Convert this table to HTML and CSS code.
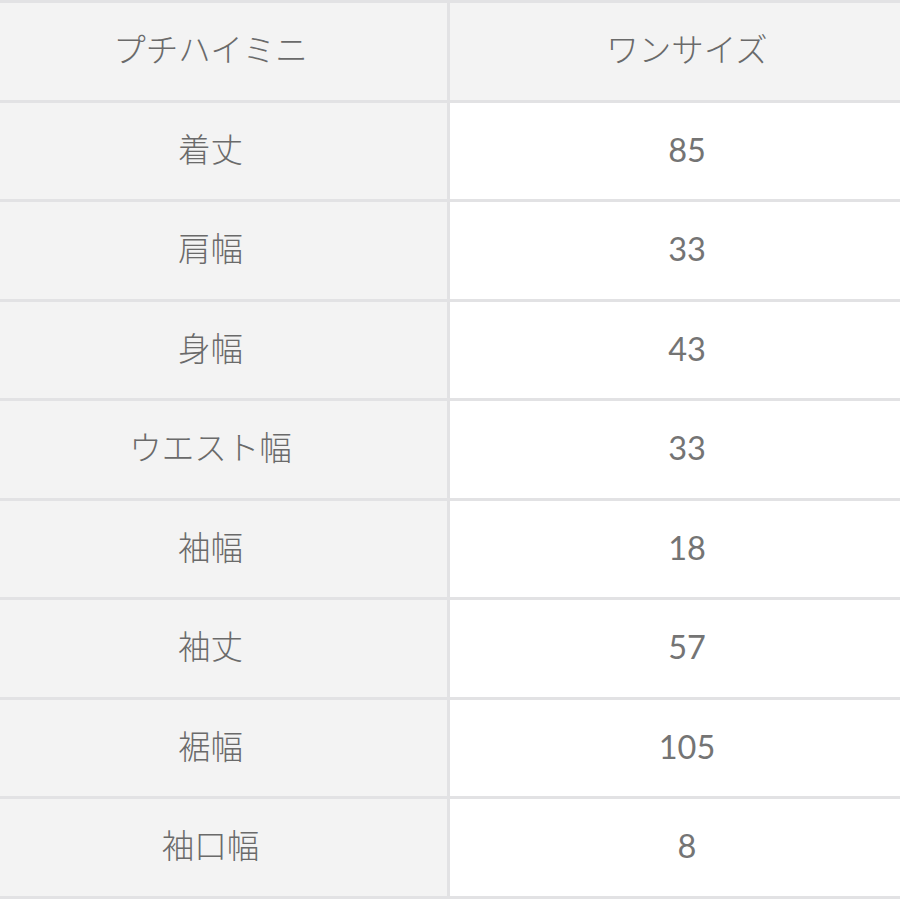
FILE: index.html
```html
<!DOCTYPE html>
<html lang="ja">
<head>
<meta charset="utf-8">
<link rel="stylesheet" href="styles.css">
</head>
<body>
<table class="size-table">
  <tr class="head"><th>プチハイミニ</th><th>ワンサイズ</th></tr>
  <tr><th>着丈</th><td>85</td></tr>
  <tr><th>肩幅</th><td>33</td></tr>
  <tr><th>身幅</th><td>43</td></tr>
  <tr><th>ウエスト幅</th><td>33</td></tr>
  <tr><th>袖幅</th><td>18</td></tr>
  <tr><th>袖丈</th><td>57</td></tr>
  <tr><th>裾幅</th><td>105</td></tr>
  <tr><th>袖口幅</th><td>8</td></tr>
</table>
</body>
</html>
```
FILE: styles.css
```css
html, body {
  margin: 0;
  padding: 0;
  background: #ffffff;
}
.size-table {
  width: 900px;
  border-collapse: collapse;
  table-layout: fixed;
  font-family: Lato, "Noto Sans CJK JP", sans-serif;
  font-size: 32.5px;
  color: #6a6a6a;
}
.size-table th,
.size-table td {
  height: 93.5px;
  padding: 0 0 3px 0;
  border: 3px solid #e2e2e4;
  text-align: center;
  vertical-align: middle;
  line-height: 1.2;
}
.size-table th {
  width: 421px;
  padding-right: 26px;
  background: #f3f3f3;
  border-left: none;
  font-weight: 300;
}
.size-table td {
  padding-left: 24px;
  background: #ffffff;
  border-right: none;
  font-weight: 400;
  color: #747474;
}
.size-table .head th {
  background: #f3f3f3;
}
.size-table .head th + th {
  width: auto;
  padding-right: 0;
  padding-left: 24px;
  border-right: none;
}
```
